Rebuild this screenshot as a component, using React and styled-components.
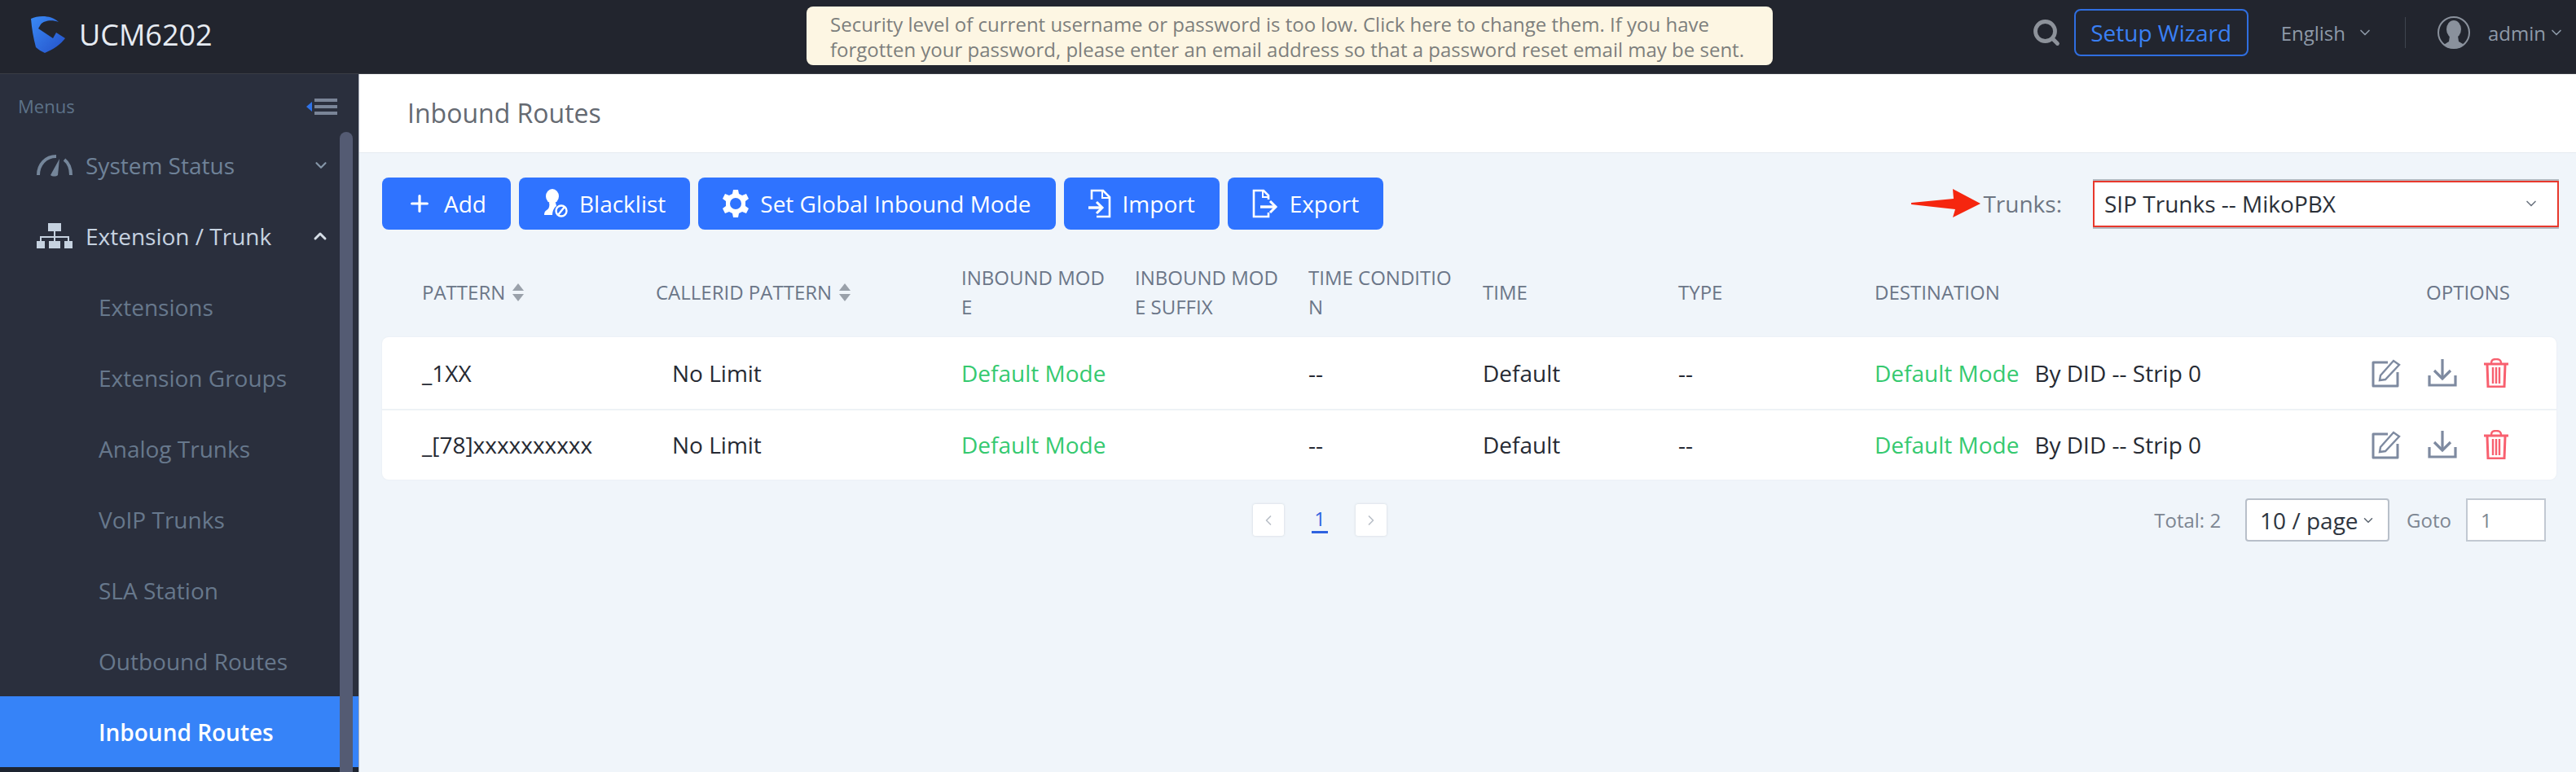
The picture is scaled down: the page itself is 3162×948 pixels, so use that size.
import React from "react";
import styled, { createGlobalStyle } from "styled-components";
import { ChevronDown, ChevronUp, ChevronLeft, ChevronRight, Search, Plus } from "lucide-react";

const GlobalStyle = createGlobalStyle`
  html, body {
    margin: 0;
    padding: 0;
    background: #f0f5fa;
    font-family: "Open Sans", "Noto Sans", sans-serif;
  }
  * { box-sizing: border-box; }
`;

const Page = styled.div`
  width: 3162px;
  height: 948px;
  display: flex;
  flex-direction: column;
  overflow: hidden;
`;

const Header = styled.header`
  height: 91px;
  flex: none;
  background: #22252e;
  border-bottom: 1px solid #3a3d45;
  display: flex;
  align-items: center;
  position: relative;
  padding: 0 14px 0 37px;
`;

const Brand = styled.div`
  display: flex;
  align-items: center;
  gap: 16px;
  color: #e6ebf2;
  font-size: 36px;
  width: 953px;
  height: 90px;
  padding-bottom: 6px;
`;

const Notice = styled.div`
  width: 1186px;
  height: 72px;
  margin-bottom: 3px;
  background: #fdf6e3;
  border-radius: 8px;
  color: #7d7f7d;
  font-size: 24px;
  line-height: 31px;
  padding: 6px 0 0 29px;
  white-space: nowrap;
`;

const HeaderRight = styled.div`
  margin-left: auto;
  display: flex;
  align-items: center;
  height: 90px;
  padding-bottom: 10px;
  color: #8e99a8;
  font-size: 24px;
`;

const WizardButton = styled.div`
  width: 214px;
  height: 58px;
  margin: 0 40px 0 16px;
  border: 2px solid #2f6ee0;
  border-radius: 8px;
  color: #3a80f5;
  font-size: 28px;
  display: flex;
  align-items: center;
  justify-content: center;
`;

const HeaderDrop = styled.div`
  display: flex;
  align-items: center;
  gap: ${({ $gap }) => $gap}px;
`;

const HeaderDivider = styled.div`
  width: 1px;
  height: 38px;
  background: #3f444f;
  margin: 0 39px 0 39px;
`;

const Avatar = styled.svg`
  width: 40px;
  height: 40px;
  margin-right: 22px;
`;

const Body = styled.div`
  flex: 1;
  display: flex;
  min-height: 0;
`;

const Sidebar = styled.aside`
  width: 440px;
  flex: none;
  background: #2a2f3d;
  position: relative;
  display: flex;
  flex-direction: column;
`;

const MenusRow = styled.div`
  height: 68px;
  flex: none;
  display: flex;
  align-items: center;
  justify-content: space-between;
  padding: 10px 26px 0 22px;
  color: #5d7288;
  font-size: 22px;
`;

const ScrollThumb = styled.div`
  position: absolute;
  top: 71px;
  bottom: 0;
  left: 417px;
  width: 16px;
  border-radius: 8px 8px 0 0;
  background: #545b73;
`;

const MenuGroup = styled.div`
  height: 87px;
  flex: none;
  display: flex;
  align-items: center;
  padding: 0 35px 0 45px;
  gap: 16px;
  font-size: 28px;
  color: ${({ $open }) => ($open ? "#c6d2e0" : "#6f8298")};
  font-weight: ${({ $open }) => ($open ? 500 : 400)};
  span { flex: 1; }
`;

const MenuItem = styled.div`
  height: 87px;
  flex: none;
  display: flex;
  align-items: center;
  padding-left: 121px;
  font-size: 28px;
  color: ${({ $active }) => ($active ? "#ffffff" : "#67788c")};
  background: ${({ $active }) => ($active ? "#3683f8" : "transparent")};
  font-weight: ${({ $active }) => ($active ? 600 : 400)};
`;

const SidebarFoot = styled.div`
  flex: 1;
  background: #1d2430;
`;

const Main = styled.main`
  flex: 1;
  min-width: 0;
  border-left: 1px solid #a9b0bb;
  display: flex;
  flex-direction: column;
`;

const TitleBar = styled.div`
  height: 97px;
  flex: none;
  background: #fff;
  border-bottom: 1px solid #e6ebf0;
  display: flex;
  align-items: center;
  padding: 0 0 2px 59px;
  font-size: 32px;
  color: #656a72;
`;

const Content = styled.div`
  flex: 1;
  padding: 30px 24px 0 28px;
`;

const Toolbar = styled.div`
  display: flex;
  align-items: center;
  height: 64px;
  gap: 10px;
`;

const Button = styled.div`
  height: 64px;
  padding: 0 30px;
  background: #2f73ff;
  border-radius: 8px;
  color: #fff;
  font-size: 28px;
  font-weight: 500;
  display: flex;
  align-items: center;
  gap: 14px;
  white-space: nowrap;
`;

const TrunkFilter = styled.div`
  margin-left: auto;
  margin-right: -3px;
  display: flex;
  align-items: center;
  color: #6e7682;
  font-size: 28px;
`;

const TrunkSelect = styled.div`
  width: 572px;
  height: 57px;
  margin-left: 38px;
  background: #fff;
  border: 2px solid #e8382c;
  box-shadow: 0 -2px 0 #b4b8bf, 0 2px 0 #b4b8bf;
  display: flex;
  align-items: center;
  justify-content: space-between;
  padding: 0 22px 0 12px;
  color: #2b3038;
`;

const RowGrid = styled.div`
  display: grid;
  grid-template-columns: 287px 375px 213px 213px 214px 240px 241px 480px 1fr;
  padding-left: 49px;
  align-items: center;
`;

const HeadRow = styled(RowGrid)`
  height: 132px;
  padding-top: 22px;
  color: #6b7688;
  font-size: 24px;
  line-height: 36px;
`;

const HeadCell = styled.div`
  width: 182px;
  word-break: break-all;
`;

const SortCell = styled.div`
  display: flex;
  align-items: center;
  gap: 9px;
  white-space: nowrap;
`;

const OptionsHead = styled.div`
  text-align: right;
  padding-right: 57px;
`;

const TableCard = styled.div`
  background: #fff;
  border-radius: 8px;
  box-shadow: 0 0 2px #e3e8ee;
`;

const DataRow = styled(RowGrid)`
  height: 87.5px;
  font-size: 28px;
  color: #262a33;
  border-top: ${({ $first }) => ($first ? "none" : "2px solid #eef2f6")};
  white-space: nowrap;
`;

const IndentCell = styled.div`
  padding-left: 20px;
`;

const Green = styled.span`
  color: #35c96f;
`;

const DestCell = styled.div`
  display: flex;
  gap: 19px;
`;

const OptionIcons = styled.div`
  display: flex;
  justify-content: flex-end;
  align-items: center;
  gap: 33px;
  padding-right: 59px;
`;

const PagerRow = styled.div`
  height: 76px;
  margin-top: 23px;
  display: flex;
  align-items: flex-start;
`;

const Pager = styled.div`
  margin-left: 1069px;
  margin-top: 7px;
  display: flex;
  align-items: center;
`;

const PageArrow = styled.div`
  width: 38px;
  height: 39px;
  background: #fff;
  border-radius: 3px;
  box-shadow: 0 0 3px #cfd5dc;
  color: #b9bfc7;
  display: flex;
  align-items: center;
  justify-content: center;
`;

const PageNumber = styled.div`
  width: 88px;
  text-align: center;
  color: #2f62e0;
  font-size: 24px;
  line-height: 30px;
  span {
    display: inline-block;
    border-bottom: 3px solid #2f62e0;
    padding: 0 3px;
  }
`;

const PagerInfo = styled.div`
  margin-left: auto;
  margin-right: 13px;
  display: flex;
  align-items: center;
  font-size: 24px;
  color: #7d8692;
`;

const PageSize = styled.div`
  width: 177px;
  height: 53px;
  margin: 0 21px 0 30px;
  background: #fff;
  border: 2px solid #b8bfc9;
  border-radius: 4px;
  color: #2e3540;
  font-size: 28px;
  display: flex;
  align-items: center;
  gap: 3px;
  padding-left: 16px;
`;

const GotoInput = styled.div`
  width: 98px;
  height: 53px;
  margin-left: 18px;
  background: #fff;
  border: 2px solid #c2c9d2;
  padding-left: 16px;
  display: flex;
  align-items: center;
`;

const menuItems = [
  "Extensions",
  "Extension Groups",
  "Analog Trunks",
  "VoIP Trunks",
  "SLA Station",
  "Outbound Routes",
  "Inbound Routes",
];

const routes = ["_1XX", "_[78]xxxxxxxxxx"];

const Logo = () => (
  <svg width="44" height="46" viewBox="0 0 44 46">
    <defs>
      <linearGradient id="logoBlue" x1="0" y1="0" x2="1" y2="1">
        <stop offset="0" stopColor="#3a8af5" />
        <stop offset="1" stopColor="#2450c8" />
      </linearGradient>
    </defs>
    <path
      d="M1 4C10 0 25 -1 35 8C27 5 17 6 13 11L10 16L28 28L32 21L43 28C38 35 28 42 18 46C14 44 10 42 7 39C4 28 2 16 1 4Z"
      fill="url(#logoBlue)"
    />
  </svg>
);

const Gauge = () => (
  <svg width="44" height="28" viewBox="0 0 44 28" fill="none" stroke="#75869a" strokeWidth="4">
    <path d="M2 26C2 13 11 3 24 3" />
    <path d="M34 7C39 11 42 18 42 26" />
    <path d="M17 26L28 6L26 26C24 28 19 28 17 26Z" fill="#75869a" stroke="none" />
  </svg>
);

const OrgChart = () => (
  <svg width="44" height="31" viewBox="0 0 44 31" fill="#c6d2e0">
    <rect x="14" y="0" width="16" height="10" />
    <rect x="0" y="22" width="10" height="9" />
    <rect x="15" y="22" width="14" height="9" />
    <rect x="34" y="22" width="10" height="9" />
    <path d="M21 10h2v6h17v6h-2v-4H23v4h-2v-4H6v4H4v-6h17z" />
  </svg>
);

const CollapseIcon = () => (
  <svg width="38" height="21" viewBox="0 0 38 21">
    <path d="M0 11L7 5V17Z" fill="#2f73e8" />
    <g fill="#7a8598">
      <rect x="10" y="1" width="28" height="4" />
      <rect x="10" y="9" width="28" height="4" />
      <rect x="10" y="17" width="28" height="4" />
    </g>
  </svg>
);

const BlacklistIcon = () => (
  <svg width="30" height="36" viewBox="0 0 30 36" fill="#fff">
    <ellipse cx="11" cy="9" rx="8" ry="9" />
    <path d="M7 17h8l1 4c-3 2-5 6-5 11H1c0-3 1-5 3-6 3-2 4-5 3-9z" />
    <circle cx="22" cy="27" r="6.5" fill="none" stroke="#fff" strokeWidth="2.4" />
    <path d="M18 32L26 22" stroke="#fff" strokeWidth="2.4" />
  </svg>
);

const GearIcon = () => (
  <svg width="32" height="36" viewBox="0 0 32 36">
    <path
      d="M13 1h6l1 5 4 2 5-2 3 6-4 3v6l4 3-3 6-5-2-4 2-1 5h-6l-1-5-4-2-5 2-3-6 4-3v-6l-4-3 3-6 5 2 4-2z"
      fill="#fff"
    />
    <circle cx="16" cy="18" r="7" fill="#2f73ff" />
  </svg>
);

const ImportIcon = () => (
  <svg width="28" height="36" viewBox="0 0 28 36" fill="none" stroke="#fff" strokeWidth="2.6">
    <path d="M4 13V2h14l8 8v24H10" />
    <path d="M17 2v9h9" strokeWidth="2" />
    <path d="M0 23h15" strokeWidth="3.4" />
    <path d="M10 16l7 7-7 7" strokeWidth="3" />
  </svg>
);

const ExportIcon = () => (
  <svg width="32" height="36" viewBox="0 0 32 36" fill="none" stroke="#fff" strokeWidth="2.6">
    <path d="M20 13V8l-6-6H2v32h18v-5" />
    <path d="M13 2v8h7" strokeWidth="2" />
    <path d="M10 22h18" strokeWidth="3.4" />
    <path d="M22 15l7 7-7 7" strokeWidth="3" />
  </svg>
);

const SortIcon = () => (
  <svg width="14" height="22" viewBox="0 0 14 22" fill="#9aa1aa">
    <path d="M7 0L14 9H0Z" />
    <path d="M7 22L0 13H14Z" />
  </svg>
);

const EditIcon = () => (
  <svg width="36" height="36" viewBox="0 0 36 36" fill="none" stroke="#7e8aa0" strokeWidth="3">
    <path d="M20 5H2V34H32V17" strokeLinejoin="round" />
    <path d="M11 21L27 3L34 8L17 26L10 27Z" strokeWidth="2.4" fill="#fff" />
  </svg>
);

const DownloadIcon = () => (
  <svg width="36" height="34" viewBox="0 0 36 34" fill="none" stroke="#7e8aa0" strokeWidth="3.2">
    <path d="M18 0V24" />
    <path d="M8 14L18 24L28 14" />
    <path d="M2 20V32H34V20" />
  </svg>
);

const TrashIcon = () => (
  <svg width="30" height="36" viewBox="0 0 30 36" fill="none" stroke="#f8606f" strokeWidth="3">
    <path d="M0 7H30" />
    <path d="M9 6C9 2 11 1 15 1S21 2 21 6" strokeWidth="2.4" />
    <path d="M4 8L5 35H25L26 8" />
    <path d="M11 11V31M15 11V31M19 11V31" strokeWidth="2.4" />
  </svg>
);

const Arrow = () => (
  <svg width="86" height="36" viewBox="0 0 86 36" style={{ marginRight: 2 }}>
    <path d="M0 17L52 12L51 0L85 18L51 35L54 25L0 19Z" fill="#f5260f" />
  </svg>
);

const App = () => {
  return (
    <Page>
      <GlobalStyle />
      <Header>
        <Brand>
          <Logo />
          UCM6202
        </Brand>
        <Notice>
          Security level of current username or password is too low. Click here to change them. If you have
          <br />
          forgotten your password, please enter an email address so that a password reset email may be sent.
        </Notice>
        <HeaderRight>
          <Search size={36} color="#8d929a" strokeWidth={3.2} />
          <WizardButton>Setup Wizard</WizardButton>
          <HeaderDrop $gap={14}>
            English
            <ChevronDown size={20} />
          </HeaderDrop>
          <HeaderDivider />
          <Avatar viewBox="0 0 40 40">
            <circle cx="20" cy="20" r="19" fill="#22252e" stroke="#8a919c" strokeWidth="2" />
            <ellipse cx="20" cy="16" rx="9" ry="11" fill="#8a919c" />
            <path d="M15 24h10l1 7c3 2 6 3 7 4-7 6-19 6-26 0 2-1 4-2 7-4z" fill="#8a919c" />
          </Avatar>
          <HeaderDrop $gap={3}>
            admin
            <ChevronDown size={20} />
          </HeaderDrop>
        </HeaderRight>
      </Header>
      <Body>
        <Sidebar>
          <MenusRow>
            Menus
            <CollapseIcon />
          </MenusRow>
          <MenuGroup>
            <Gauge />
            <span>System Status</span>
            <ChevronDown size={22} color="#8596a8" strokeWidth={2.4} />
          </MenuGroup>
          <MenuGroup $open>
            <OrgChart />
            <span>Extension / Trunk</span>
            <ChevronUp size={24} color="#d5dde6" strokeWidth={3} />
          </MenuGroup>
          {menuItems.map((item) => (
            <MenuItem key={item} $active={item === "Inbound Routes"}>
              {item}
            </MenuItem>
          ))}
          <SidebarFoot />
          <ScrollThumb />
        </Sidebar>
        <Main>
          <TitleBar>Inbound Routes</TitleBar>
          <Content>
            <Toolbar>
              <Button>
                <Plus size={32} strokeWidth={2.4} />
                Add
              </Button>
              <Button>
                <BlacklistIcon />
                Blacklist
              </Button>
              <Button>
                <GearIcon />
                Set Global Inbound Mode
              </Button>
              <Button>
                <ImportIcon />
                Import
              </Button>
              <Button>
                <ExportIcon />
                Export
              </Button>
              <TrunkFilter>
                <Arrow />
                Trunks:
                <TrunkSelect>
                  SIP Trunks -- MikoPBX
                  <ChevronDown size={20} color="#6e7682" />
                </TrunkSelect>
              </TrunkFilter>
            </Toolbar>
            <HeadRow>
              <SortCell>
                PATTERN
                <SortIcon />
              </SortCell>
              <SortCell>
                CALLERID PATTERN
                <SortIcon />
              </SortCell>
              <HeadCell>INBOUND MODE</HeadCell>
              <HeadCell>INBOUND MODE SUFFIX</HeadCell>
              <HeadCell>TIME CONDITION</HeadCell>
              <HeadCell>TIME</HeadCell>
              <HeadCell>TYPE</HeadCell>
              <HeadCell>DESTINATION</HeadCell>
              <OptionsHead>OPTIONS</OptionsHead>
            </HeadRow>
            <TableCard>
              {routes.map((route, i) => (
                <DataRow key={route} $first={i === 0}>
                  <div>{route}</div>
                  <IndentCell>No Limit</IndentCell>
                  <Green>Default Mode</Green>
                  <div />
                  <div>--</div>
                  <div>Default</div>
                  <div>--</div>
                  <DestCell>
                    <Green>Default Mode</Green>
                    By DID -- Strip 0
                  </DestCell>
                  <OptionIcons>
                    <EditIcon />
                    <DownloadIcon />
                    <TrashIcon />
                  </OptionIcons>
                </DataRow>
              ))}
            </TableCard>
            <PagerRow>
              <Pager>
                <PageArrow>
                  <ChevronLeft size={20} />
                </PageArrow>
                <PageNumber>
                  <span>1</span>
                </PageNumber>
                <PageArrow>
                  <ChevronRight size={20} />
                </PageArrow>
              </Pager>
              <PagerInfo>
                Total: 2
                <PageSize>
                  10 / page
                  <ChevronDown size={18} color="#5b6470" />
                </PageSize>
                Goto
                <GotoInput>1</GotoInput>
              </PagerInfo>
            </PagerRow>
          </Content>
        </Main>
      </Body>
    </Page>
  );
};

export default App;
